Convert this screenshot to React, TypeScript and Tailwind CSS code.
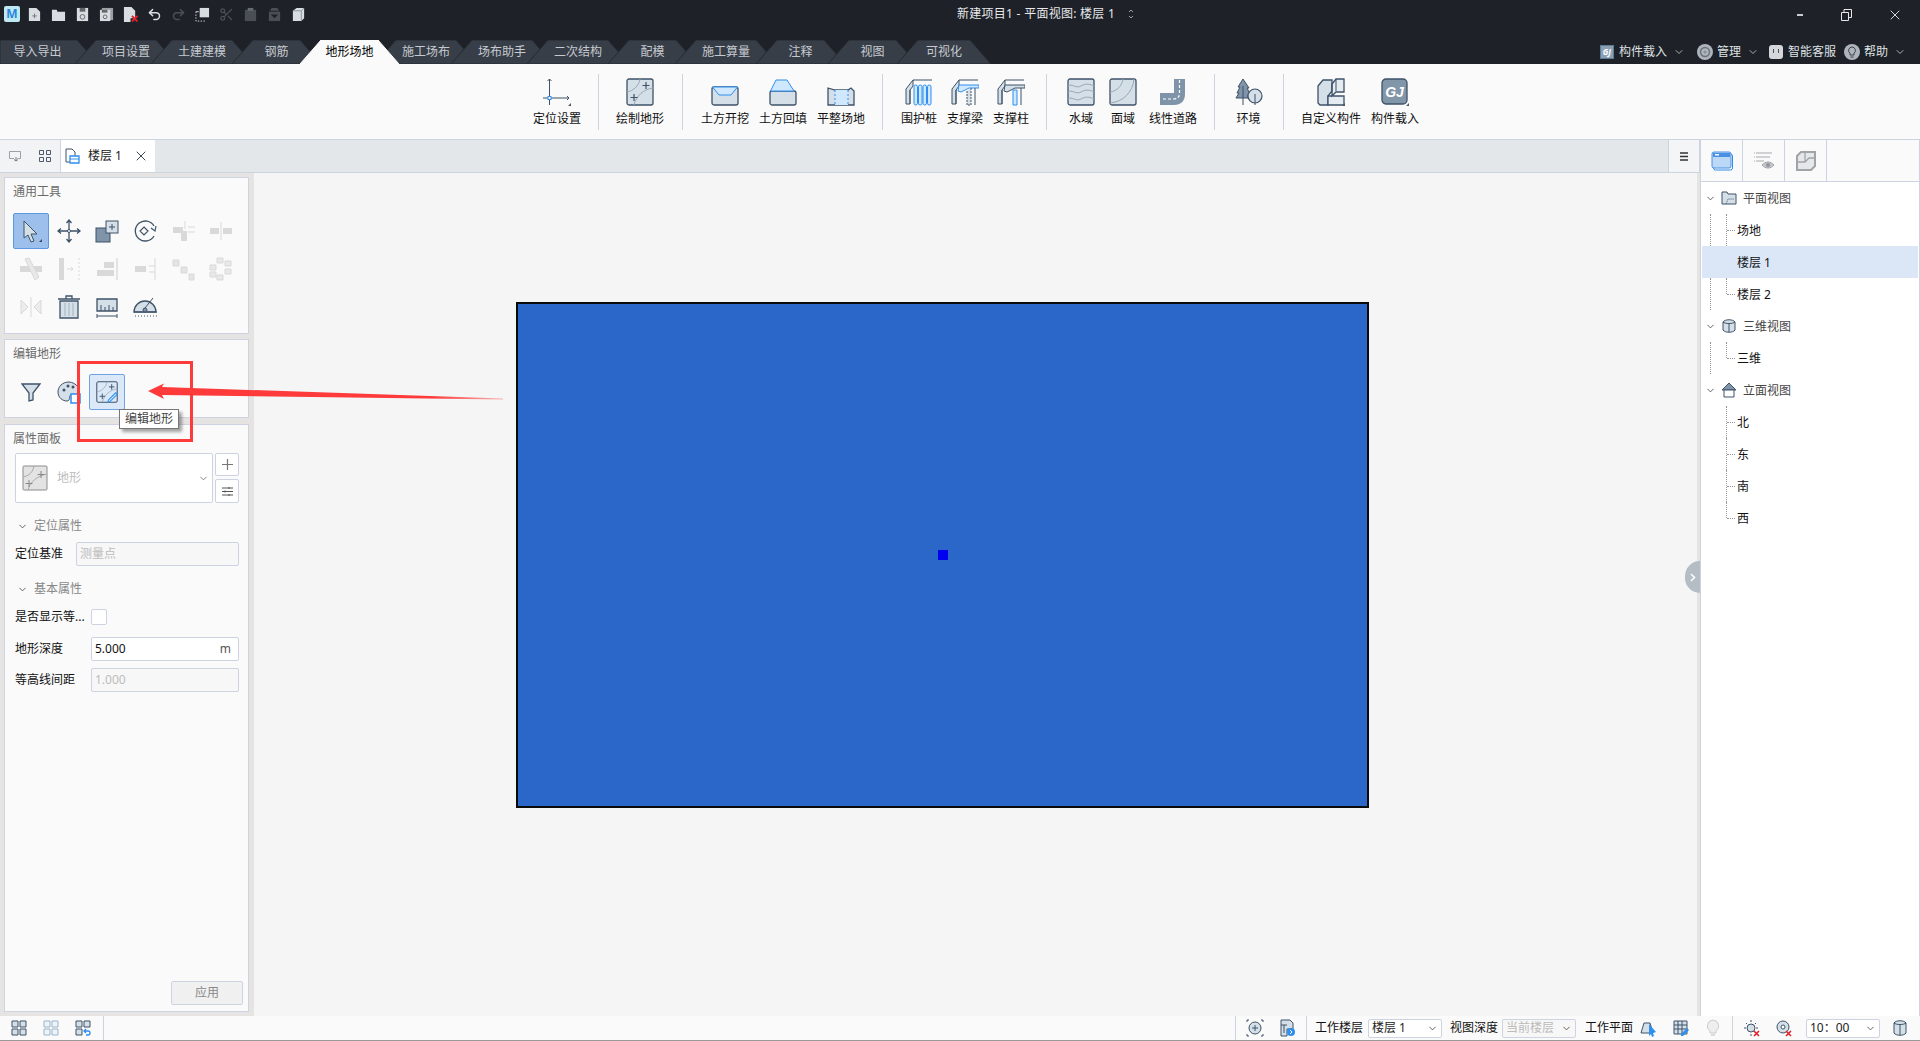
import { ReactNode } from 'react';
import { ChevronDown, Scissors, Undo2, Redo2, X } from 'lucide-react';

const S = '#3e5368';
const F = '#d5dfe8';
const M = '#7f94a9';
const B = '#2e8fef';
const L = '#cfe8fd';
const D = '#d9d9d9';

function Ic({ s = 28, v, children }: { s?: number; v?: number; children: ReactNode }) {
  const box = v ?? s;
  return (
    <svg width={s} height={s} viewBox={`0 0 ${box} ${box}`} fill="none" className="shrink-0">
      {children}
    </svg>
  );
}

const Corner = () => <path d="M28 25v3h-3z" fill="#556" />;

const TABS = [
  { label: '导入导出', w: 98, cls: 'w-[98px] pr-[23px]', first: true },
  { label: '项目设置', w: 102, cls: 'w-[102px] ml-[-23px]' },
  { label: '土建建模', w: 102, cls: 'w-[102px] ml-[-26px]' },
  { label: '钢筋', w: 89, cls: 'w-[89px] ml-[-21px]' },
  { label: '地形场地', w: 99, cls: 'w-[99px] ml-[-21px] z-10', active: true },
  { label: '施工场布', w: 102, cls: 'w-[102px] ml-[-24px]' },
  { label: '场布助手', w: 102, cls: 'w-[102px] ml-[-26px]' },
  { label: '二次结构', w: 102, cls: 'w-[102px] ml-[-26px]' },
  { label: '配模', w: 89, cls: 'w-[89px] ml-[-21px]' },
  { label: '施工算量', w: 102, cls: 'w-[102px] ml-[-22px]' },
  { label: '注释', w: 89, cls: 'w-[89px] ml-[-21px]' },
  { label: '视图', w: 89, cls: 'w-[89px] ml-[-17px]' },
  { label: '可视化', w: 94, cls: 'w-[94px] ml-[-20px]' },
];

function TabBar() {
  return (
    <div className="flex h-6 items-stretch">
      {TABS.map((t) => (
        <div key={t.label} className={`relative flex shrink-0 items-center justify-center ${t.cls}`}>
          <svg width={t.w} height={24} className="absolute left-0 top-0">
            <path
              d={t.first ? `M0 24V0H${t.w - 21}L${t.w} 24Z` : `M0 24L21 0H${t.w - 21}L${t.w} 24Z`}
              fill={t.active ? '#fafafa' : '#383e48'}
              stroke={t.active ? '#fafafa' : '#262a30'}
              strokeWidth="1"
            />
          </svg>
          <span className={`relative text-xs ${t.active ? 'text-black' : 'text-[#c6cad0]'}`}>{t.label}</span>
        </div>
      ))}
    </div>
  );
}

function QuickBar() {
  const c = '#d8dde2';
  const off = '#4a4f56';
  return (
    <div className="flex items-center pl-1 pt-[6px]">
      <div className="flex h-4 w-4 items-center justify-center rounded-[2px] bg-[#bfe9f2] text-xs font-bold leading-none text-[#2a86dc]">M</div>
      <div className="ml-[7px] flex gap-[9px]">
        <Ic s={15} v={16}><path d="M2 1h8l4 4v10H2z" fill={c} /><path d="M8 7v5M5.500 9.500h5" stroke="#777" /></Ic>
        <Ic s={15} v={16}><path d="M1 3h5l1 2h8v10H1z" fill={c} /></Ic>
        <Ic s={15} v={16}><path d="M2 1h12v14H2z" fill={c} /><path d="M5 1h6v4H5z" fill="#666" /><circle cx="8" cy="10.500" r="2.500" fill="none" stroke="#666" /></Ic>
        <Ic s={15} v={16}><path d="M3 1h12v13H3z" fill="#9aa0a6" /><path d="M1 3h11v12H1z" fill={c} /><path d="M3 3h6v3H3z" fill="#666" /><circle cx="6.500" cy="10.500" r="2" fill="none" stroke="#666" /></Ic>
        <Ic s={15} v={16}><path d="M1 0h8l4 4v8H8v4H1z" fill={c} /><path d="M9.500 9.500l6 6M15.500 9.500l-6 6" stroke="#e0202a" strokeWidth="2" /></Ic>
        <Undo2 size={15} color={c} strokeWidth={2.4} />
        <Redo2 size={15} color={off} strokeWidth={2.4} />
        <Ic s={15} v={16}><path d="M5 1h10v10H5z" fill={c} /><path d="M1 5v10h10" stroke={c} strokeDasharray="1.500 1.500" /><path d="M1 5h3" stroke={c} /></Ic>
        <Scissors size={15} color={off} strokeWidth={2} />
        <Ic s={15} v={16}><path d="M2 3h12v12H2z" fill={off} /><path d="M5 1h6v3H5z" fill="#666b72" /></Ic>
        <Ic s={15} v={16}><path d="M2 5h12v10H2z" fill={off} /><path d="M5 1h6l2 3H3z" fill={off} /><path d="M4 8h8l-4 4z" fill="#1e2127" /></Ic>
        <Ic s={15} v={16}><path d="M2 4l4-3h8v11l-3 3H2z" fill={c} /><path d="M11 15V4H2M11 4l3-3" stroke="#8a9097" /></Ic>
      </div>
    </div>
  );
}

function TitleRow() {
  return (
    <div className="relative flex h-10 items-start">
      <QuickBar />
      <div className="ml-[651px] flex items-center pt-[5px] text-xs leading-[18px] tracking-[0.27px] text-[#e6e8ea]">
        <span className="w-[171px] whitespace-nowrap">新建项目1 - 平面视图: 楼层 1</span>
        <svg width="6" height="12" viewBox="0 0 6 12" fill="none" stroke="#9aa0a6"><path d="M1 4l2-2 2 2M1 8l2 2 2-2" /></svg>
      </div>
      <div className="ml-auto flex items-center pr-[17px] pt-[7px]">
        <span className="h-[2px] w-[6px] bg-[#c8ccd0]" />
        <svg width="11" height="12" viewBox="0 0 11 12" fill="none" stroke="#e4e6e8" className="ml-[38px]"><path d="M.5 3.500h7v8h-7zM3 3.500v-3h7.500v8H8" /></svg>
        <X size={16} color="#e4e6e8" strokeWidth={1.4} className="ml-[35px]" />
      </div>
    </div>
  );
}

function TopRight() {
  return (
    <div className="ml-auto flex items-center pb-[1px] pr-[14px] text-xs text-[#dfe2e5]">
      <div className="flex h-[14px] w-[14px] items-center justify-center border border-[#5d7a96] bg-[#8ca0b4] text-[8px] font-bold italic leading-none text-white">GJ</div>
      <span className="ml-[5px]">构件载入</span>
      <ChevronDown size={12} color="#aab0b6" className="ml-[6px]" />
      <svg width="16" height="16" viewBox="0 0 16 16" className="ml-[12px]"><circle cx="8" cy="8" r="8" fill="#aeb4bb" /><circle cx="8" cy="8" r="4.500" fill="none" stroke="#6c7279" strokeWidth="1.500" /><circle cx="8" cy="8" r="1.500" fill="#8a9096" /></svg>
      <span className="ml-1">管理</span>
      <ChevronDown size={12} color="#aab0b6" className="ml-[6px]" />
      <svg width="14" height="14" viewBox="0 0 14 14" className="ml-[10px]"><rect width="14" height="14" rx="3" fill="#d4d8dc" /><path d="M4.500 4v4M9.500 4v4" stroke="#4a4f56" /></svg>
      <span className="ml-[5px]">智能客服</span>
      <svg width="16" height="16" viewBox="0 0 16 16" className="ml-2"><circle cx="8" cy="8" r="8" fill="#aeb4bb" /><path d="M8 3a3.500 3.500 0 0 0-2 6.300V11h4V9.300A3.500 3.500 0 0 0 8 3z" fill="none" stroke="#3b4047" /><path d="M6.500 13h3" stroke="#3b4047" /></svg>
      <span className="ml-1">帮助</span>
      <ChevronDown size={12} color="#aab0b6" className="ml-[6px]" />
    </div>
  );
}

const TerrainArt = ({ pen = false }: { pen?: boolean }) => (
  <>
    <rect x="1" y="1" width="26" height="26" rx="2" fill={pen ? 'none' : F} stroke={S} strokeWidth="1.300" />
    <path d="M1 14C7 13 13 8 14 1M8 27C10 18 18 11 27 10" stroke="#98a6b4" />
    <path d="M20 4v7M16.500 7.500h7M8 16v7M4.500 19.500h7" stroke={S} strokeWidth="1.200" />
  </>
);

const SlabArt = () => (
  <>
    <path d="M8 2h19M1 11L8 2v6L5 12v14H1z" fill={F} stroke={S} />
    <path d="M5 12v14" stroke={S} />
  </>
);

const RIBBON: { items: { label: string; cls: string; icon: ReactNode }[]; cls: string }[] = [
  {
    cls: 'w-[82px]',
    items: [
      {
        label: '定位设置',
        cls: 'w-full',
        icon: (
          <Ic>
            <path d="M6.500 1v26M0 20h26M4.500 3l2-2 2 2M24 18l2 2-2 2" stroke={S} />
            <rect x="5" y="18.500" width="3" height="3" fill="#fff" stroke={B} />
            <Corner />
          </Ic>
        ),
      },
    ],
  },
  {
    cls: 'w-[84px]',
    items: [{ label: '绘制地形', cls: 'w-full', icon: <Ic><TerrainArt /></Ic> }],
  },
  {
    cls: 'pl-[14px] pr-[12px]',
    items: [
      {
        label: '土方开挖',
        cls: 'w-[58px]',
        icon: (
          <Ic>
            <rect x="1" y="9" width="26" height="18" rx="2" fill={F} stroke={S} strokeWidth="1.300" />
            <path d="M1.500 9h25L20 17H8z" fill={L} stroke={B} />
          </Ic>
        ),
      },
      {
        label: '土方回填',
        cls: 'w-[58px]',
        icon: (
          <Ic>
            <rect x="1" y="13" width="26" height="14" rx="2" fill={F} stroke={S} strokeWidth="1.300" />
            <path d="M7 2h11l7 11H1.500z" fill={L} stroke={B} />
          </Ic>
        ),
      },
      {
        label: '平整场地',
        cls: 'w-[58px]',
        icon: (
          <Ic>
            <path d="M1 10l7 2h13l3-2 3 3v14H1z" fill={F} stroke={S} strokeWidth="1.300" />
            <path d="M8 12h13v15H8z" fill={L} />
            <path d="M8 12v15M21 12v15" stroke={B} strokeDasharray="2 2" />
          </Ic>
        ),
      },
    ],
  },
  {
    cls: 'pl-[14px] pr-[12px]',
    items: [
      {
        label: '围护桩',
        cls: 'w-[46px]',
        icon: (
          <Ic>
            <SlabArt />
            {[9, 13.5, 18, 22.5].map((x) => (
              <rect key={x} x={x} y="7" width="3.500" height="20" rx="1.700" fill={L} stroke={B} />
            ))}
          </Ic>
        ),
      },
      {
        label: '支撑梁',
        cls: 'w-[46px]',
        icon: (
          <Ic>
            <SlabArt />
            <path d="M8 7h20v3H18l-8 4-3-1z" fill={L} stroke={B} />
            <path d="M16 13v14h4V10" fill={F} stroke={S} strokeDasharray="2 1" />
            <path d="M24 10v17" stroke={S} />
          </Ic>
        ),
      },
      {
        label: '支撑柱',
        cls: 'w-[46px]',
        icon: (
          <Ic>
            <SlabArt />
            <path d="M8 7h20v3H18l-8 4-3-1z" fill={F} stroke={S} />
            <path d="M16 12h4v15h-4z" fill={L} stroke={B} />
            <path d="M24 10v17" stroke={S} />
          </Ic>
        ),
      },
    ],
  },
  {
    cls: 'pl-[14px] pr-[12px]',
    items: [
      {
        label: '水域',
        cls: 'w-[42px]',
        icon: (
          <Ic>
            <rect x="1" y="1" width="26" height="26" rx="2" fill={F} stroke={S} strokeWidth="1.300" />
            <path d="M1 8c4-3 8 3 13 0s9-2 13 0M1 14c4-3 8 3 13 0s9-2 13 0M1 21c4-3 8 3 13 0s9-2 13 0" stroke="#98a6b4" />
          </Ic>
        ),
      },
      {
        label: '面域',
        cls: 'w-[42px]',
        icon: (
          <Ic>
            <rect x="1" y="1" width="26" height="26" rx="2" fill={F} stroke={S} strokeWidth="1.300" />
            <path d="M1 14C8 13 13 8 14 1M1 25C14 24 24 14 25 1" stroke="#98a6b4" />
          </Ic>
        ),
      },
      {
        label: '线性道路',
        cls: 'w-[58px]',
        icon: (
          <Ic>
            <path d="M15 1h11v15c0 7-4 11-11 11H1V15h14z" fill={M} />
            <path d="M20.500 2v13c0 4-2 6-6 6H2" stroke="#fff" strokeWidth="1.200" strokeDasharray="3 2" />
          </Ic>
        ),
      },
    ],
  },
  {
    cls: 'w-[69px]',
    items: [
      {
        label: '环境',
        cls: 'w-full',
        icon: (
          <Ic>
            <path d="M8 1l6 9h-2l3 6h-2v4H1l3-5H2l3-6H3z" fill={M} stroke={S} />
            <path d="M8 8v19" stroke={S} />
            <circle cx="20" cy="18" r="7" fill={F} stroke={S} strokeWidth="1.200" />
            <path d="M20 16v11" stroke={S} />
          </Ic>
        ),
      },
    ],
  },
  {
    cls: 'pl-[17px]',
    items: [
      {
        label: '自定义构件',
        cls: 'w-[62px]',
        icon: (
          <Ic>
            <path d="M1 8l5-6h9v11l-4 5v9H3l-2-2z" fill={F} stroke={S} strokeWidth="1.300" />
            <path d="M15 6l4-5h8v13h-8l-4 4zM11 18h16v9H11z" fill="#e4ebf1" stroke={S} strokeWidth="1.300" />
            <path d="M15 6v8M19 1v12" stroke={S} />
            <Corner />
          </Ic>
        ),
      },
      {
        label: '构件载入',
        cls: 'w-[66px]',
        icon: (
          <Ic>
            <rect x="1" y="1" width="25" height="25" rx="4" fill="#8296aa" stroke={S} strokeWidth="1.300" />
            <text x="13.500" y="19" textAnchor="middle" fontSize="14" fontWeight="900" fontStyle="italic" fontFamily="Liberation Sans, sans-serif" fill="#fff">GJ</text>
            <Corner />
          </Ic>
        ),
      },
    ],
  },
];

function Ribbon() {
  return (
    <div className="flex h-[76px] border-b border-[#cdd3df] bg-[#fafafa] pl-[516px]">
      {RIBBON.map((g, i) => (
        <div key={i} className={`relative flex h-full shrink-0 pt-[14px] ${g.cls}`}>
          {g.items.map((it) => (
            <div key={it.label} className={`flex shrink-0 flex-col items-center ${it.cls}`}>
              {it.icon}
              <span className="mt-[5px] whitespace-nowrap text-xs leading-4 text-[#111]">{it.label}</span>
            </div>
          ))}
          {i < RIBBON.length - 1 && <span className="absolute bottom-[9px] right-[-1px] top-[10px] w-px bg-[#ccd3db]" />}
        </div>
      ))}
    </div>
  );
}

function TabStrip() {
  return (
    <div className="flex h-[33px] shrink-0 items-stretch border-b border-[#cdd3e0] bg-[#e4e7ea]">
      <div className="flex w-[60px] items-center bg-[#f2f3f4] pl-[9px]">
        <svg width="12" height="12" viewBox="0 0 12 12" fill="none" stroke="#9aa0a8"><path d="M.5 1.500h11v7h-3M5 8.500H.500v-7" /><path d="M7 7v4M5 9.500l2 1.500 2-1.500" stroke="#777" /></svg>
        <svg width="12" height="12" viewBox="0 0 12 12" fill="none" stroke="#4a5a6a" className="ml-[18px]"><path d="M.5.500h4v4h-4zM7.500.500h4v4h-4zM.5 7.500h4v4h-4zM7.500 7.500h4v4h-4z" /></svg>
      </div>
      <div className="flex w-[95px] items-center border-l border-[#cdd3e0] bg-white pl-[4px] text-xs text-[#222]">
        <svg width="15" height="16" viewBox="0 0 15 16" fill="none"><path d="M1 1h6l3 3v4" stroke={S} /><path d="M1 1v13h4" stroke={S} /><path d="M5 8h9v7H5z" fill="#fff" stroke={B} strokeWidth="1.300" /><path d="M5 11h9" stroke={B} /></svg>
        <span className="ml-[8px]">楼层 1</span>
        <X size={16} color="#3d4650" strokeWidth={1.5} className="ml-[11px]" />
      </div>
      <div className="ml-auto flex w-[32px] items-center justify-center border-x border-[#cdd3e0] bg-[#f4f5f6]">
        <svg width="8" height="9" viewBox="0 0 8 9" stroke="#333"><path d="M0 1h8M0 4.500h8M0 8h8" strokeWidth="1.300" /></svg>
      </div>
    </div>
  );
}

function Cell({ on, tint, children }: { on?: boolean; tint?: boolean; children: ReactNode }) {
  return (
    <div className="flex h-[38px] w-[38px] items-center justify-center">
      <div className={`flex h-9 w-9 items-center justify-center rounded-[2px] ${on ? 'border border-[#5b97e2] bg-[#9dbfeb]' : tint ? 'border border-[#6ea3e4] bg-[#dbe8f7]' : ''}`}>{children}</div>
    </div>
  );
}

const TOOLS: ReactNode[] = [
  <Ic s={24}><path d="M5 2l13 13h-6l3 7-3 1-3-7-4 3z" fill={F} stroke={S} /><path d="M23 20v3h-3z" fill="#445" /></Ic>,
  <Ic s={24}><path d="M12 1v22M1 12h22M9.500 4L12 1l2.500 3M9.500 20l2.500 3 2.500-3M4 9.500L1 12l3 2.500M20 9.500l3 2.500-3 2.500" stroke={S} strokeWidth="1.300" /><circle cx="12" cy="12" r="1.500" fill="#fff" stroke={S} /></Ic>,
  <Ic s={24}><rect x="1" y="9" width="14" height="14" fill={M} stroke={S} /><rect x="11" y="2" width="12" height="12" fill={F} stroke={S} /><path d="M17 5v6M14 8h6" stroke={S} /></Ic>,
  <Ic s={24}><path d="M21 17a10 10 0 1 1 0-10" stroke={S} strokeWidth="1.300" /><path d="M18 9l4 3 1-5M11 8l4 4-4 4-4-4z" stroke={S} strokeWidth="1.200" /></Ic>,
  <Ic s={24}><path d="M2 8h10v4h4v10h-6V14H2z" fill={D} /><path d="M14 2v8M17 8h7M17 13h7" stroke={D} /></Ic>,
  <Ic s={24}><path d="M1 9h9v6H1zM14 9h9v6h-9z" fill={D} /><path d="M12 3v18" stroke={D} /></Ic>,
  <Ic s={24}><path d="M1 9h22v6H1z" fill={D} /><path d="M6 2l4-1 10 19-4 3z" fill="#e8e8e8" stroke={D} /></Ic>,
  <Ic s={24}><path d="M2 1h5v22H2z" fill={D} /><path d="M10 12h6M14 10l2 2-2 2" stroke={D} /><path d="M22 1v22" stroke={D} strokeDasharray="2 2" /></Ic>,
  <Ic s={24}><path d="M9 5h10v6H9zM2 13h17v6H2z" fill={D} /><path d="M22 1v22" stroke={D} strokeWidth="1.300" /></Ic>,
  <Ic s={24}><path d="M2 9h11v6H2z" fill={D} /><path d="M22 1v22M16 9h6M16 15h6" stroke={D} /></Ic>,
  <Ic s={24}><path d="M2 3h6v6H2zM10 10h6v6h-6zM18 17h5v6h-5z" fill="#e4e4e4" stroke={D} /></Ic>,
  <Ic s={24}><path d="M8 1h6v5H8zM16 4h6v5h-6zM1 8h6v5H1zM16 12h6v5h-6zM1 15h6v5H1zM8 18h6v5H8z" fill="#e8e8e8" stroke={D} /></Ic>,
  <Ic s={24}><path d="M2 5l7 7-7 7zM22 5l-7 7 7 7z" fill="#ececec" stroke={D} /><path d="M12 2v20" stroke={D} /></Ic>,
  <Ic s={24}><path d="M1 4h22M9 4V1h6v3" stroke={S} strokeWidth="1.300" /><path d="M3 6h18v17H3z" fill={F} stroke={S} strokeWidth="1.300" /><path d="M8 8v13M12 8v13M16 8v13" stroke="#a3b3c2" /></Ic>,
  <Ic s={24}><path d="M2 4h20v12H2z" fill={F} stroke={S} strokeWidth="1.300" /><path d="M6 10v6M10 12v4M14 10v6M18 12v4M2 21h20M2 19v4M22 19v4" stroke={S} /></Ic>,
  <Ic s={24}><path d="M1 17a11 11 0 0 1 22 0z" fill={F} stroke={S} strokeWidth="1.300" /><path d="M1 17h23" stroke={S} /><path d="M2 21h22" stroke={S} strokeDasharray="1 2" /><circle cx="12" cy="15" r="2" fill={M} stroke={S} /><path d="M12 13l8-10" stroke={S} /></Ic>,
];

function PanelTitle({ h, children }: { h: string; children: ReactNode }) {
  return <div className={`pl-[8px] pt-[1px] text-xs leading-[26px] text-[#6a6a6a] ${h}`}>{children}</div>;
}

function FieldBox({ disabled, children }: { disabled?: boolean; children: ReactNode }) {
  return (
    <div className={`flex h-6 flex-1 items-center rounded-[2px] border border-[#cdd3e0] px-[3px] text-xs ${disabled ? 'bg-[#f7f7f7] text-[#bcbcbc]' : 'bg-white text-[#111]'}`}>
      {children}
    </div>
  );
}

function SectionHead({ cls, children }: { cls: string; children: ReactNode }) {
  return (
    <div className={`flex h-5 items-center pl-[12px] text-xs text-[#888] ${cls}`}>
      <ChevronDown size={11} color="#555" strokeWidth={2} />
      <span className="ml-[6px]">{children}</span>
    </div>
  );
}

function LeftColumn() {
  return (
    <div className="flex w-[254px] shrink-0 flex-col bg-[#e6e4e2] pb-1 pl-1 pr-[5px] pt-1">
      <div className="h-[157px] shrink-0 border border-[#cdd3e0] bg-[#fafafa]">
        <PanelTitle h="h-[34px]">通用工具</PanelTitle>
        <div className="ml-[7px] flex flex-wrap">
          {TOOLS.map((t, i) => (
            <Cell key={i} on={i === 0}>{t}</Cell>
          ))}
        </div>
      </div>
      <div className="mt-[5px] h-[79px] shrink-0 border border-[#cdd3e0] bg-[#fafafa]">
        <PanelTitle h="h-[33px]">编辑地形</PanelTitle>
        <div className="ml-[7px] flex">
          <Cell>
            <Ic s={20}><path d="M1 2h18l-7 9v7l-4 1v-8z" fill={F} stroke={S} strokeWidth="1.300" /></Ic>
          </Cell>
          <Cell>
            <Ic s={24}><path d="M12 2C5 2 1 7 1 12c0 6 5 9 9 9 3 0 2-3 3-5 1-3 5-1 8-2 2-1 2-4 0-7-2-3-6-5-9-5z" fill={F} stroke={S} /><circle cx="7" cy="10" r="1.500" fill={S} /><circle cx="11" cy="6" r="1.500" fill={S} /><circle cx="16" cy="7" r="1.500" fill={S} /><rect x="14" y="14" width="9" height="9" fill="#fff" stroke={B} strokeWidth="1.500" /></Ic>
          </Cell>
          <Cell tint>
            <Ic s={22} v={28}>
              <TerrainArt pen />
              <path d="M16 24l9-9 2 2-9 9-3 1z" fill={L} stroke={B} strokeWidth="1.300" />
            </Ic>
          </Cell>
        </div>
      </div>
      <div className="mt-[6px] flex flex-1 flex-col border border-[#cdd3e0] bg-[#fafafa]">
        <PanelTitle h="h-[26px]">属性面板</PanelTitle>
        <div className="mt-[2px] flex gap-[2px] pl-[10px] pr-[9px]">
          <div className="flex h-[50px] w-[198px] items-center rounded-[2px] border border-[#cdd3e0] bg-white pl-[6px] pr-[3px] text-xs text-[#bdbdbd]">
            <Ic s={26}>
              <rect x="1" y="1" width="24" height="24" rx="1" fill="#e3e3e3" stroke="#8d8d8d" />
              <path d="M1 12C7 11 11 7 12 1M6 25C8 17 15 11 25 9" stroke="#aaa" />
              <path d="M19 6v7M15.500 9.500h7M7 15v7M3.500 18.500h7" stroke="#888" />
            </Ic>
            <span className="ml-[9px]">地形</span>
            <ChevronDown size={11} color="#777" className="ml-auto" />
          </div>
          <div className="flex w-6 flex-col gap-[3px]">
            <div className="flex h-[23px] items-center justify-center rounded-[2px] border border-[#cdd3e0] bg-white">
              <svg width="11" height="11" stroke="#777" strokeWidth="1.200"><path d="M5.500 0v11M0 5.500h11" /></svg>
            </div>
            <div className="flex h-6 items-center justify-center rounded-[2px] border border-[#cdd3e0] bg-white">
              <svg width="11" height="9" stroke="#555"><path d="M0 1h11M0 4.500h11M0 8h11" /><path d="M7 0v2M3 3.500v2M7 7v2" /></svg>
            </div>
          </div>
        </div>
        <SectionHead cls="mt-[13px]">定位属性</SectionHead>
        <div className="mt-[6px] flex items-center pl-[10px] pr-[9px] text-xs text-[#111]">
          <span className="w-[61px] shrink-0">定位基准</span>
          <FieldBox disabled>测量点</FieldBox>
        </div>
        <SectionHead cls="mt-[13px]">基本属性</SectionHead>
        <div className="mt-[10px] flex h-4 items-center pl-[10px] text-xs text-[#111]">
          <span className="w-[76px] shrink-0 whitespace-nowrap">是否显示等...</span>
          <span className="h-4 w-4 rounded-[2px] border border-[#cdd3e0] bg-white" />
        </div>
        <div className="mt-[12px] flex items-center pl-[10px] pr-[9px] text-xs text-[#111]">
          <span className="w-[76px] shrink-0">地形深度</span>
          <FieldBox>
            5.000<span className="ml-auto pr-[4px] text-[#555]">m</span>
          </FieldBox>
        </div>
        <div className="mt-[7px] flex items-center pl-[10px] pr-[9px] text-xs text-[#111]">
          <span className="w-[76px] shrink-0">等高线间距</span>
          <FieldBox disabled>1.000</FieldBox>
        </div>
        <div className="mb-[6px] mr-[5px] mt-auto flex h-6 w-[72px] items-center justify-center self-end rounded-[2px] border border-[#cdd3e0] bg-[#f0f0f0] text-xs text-[#888]">应用</div>
      </div>
    </div>
  );
}

function Canvas() {
  return (
    <div className="min-w-0 flex-1 bg-[#f5f5f5] pl-[262px] pt-[129px]">
      <div className="flex h-[506px] w-[853px] items-center justify-center border-2 border-[#0a0a0a] bg-[#2a67c8]">
        <span className="h-[10px] w-[10px] bg-[#0000f0]" />
      </div>
    </div>
  );
}

const TREE = [
  { label: '平面视图', icon: 'plan' },
  { label: '场地', g1: true, g2: 'full', tick: true },
  { label: '楼层 1', sel: true },
  { label: '楼层 2', g1: true, g2: 'half', tick: true },
  { label: '三维视图', icon: 'cube' },
  { label: '三维', g1: true, g2: 'half', tick: true },
  { label: '立面视图', icon: 'house' },
  { label: '北', g2: 'full', tick: true },
  { label: '东', g2: 'full', tick: true },
  { label: '南', g2: 'full', tick: true },
  { label: '西', g2: 'half', tick: true },
];

function TreeIcon({ kind }: { kind?: string }) {
  if (kind === 'plan')
    return <Ic s={16}><path d="M1 2h5l1 2h8v10H1z" fill={F} stroke={S} /><path d="M5 14l2-5h6" stroke={S} strokeDasharray="1 1" /></Ic>;
  if (kind === 'cube')
    return <Ic s={16}><path d="M2 4c2-3 10-3 12 0v8c-2 3-10 3-12 0z" fill={F} stroke={S} /><path d="M2 4c2 2 10 2 12 0M8 6v8" stroke={S} /></Ic>;
  return <Ic s={16}><path d="M8 1l7 7H1z" fill={M} stroke={S} /><path d="M3 8h10v7H3z" fill="#fff" stroke={S} /></Ic>;
}

function RightPanel() {
  return (
    <div className="flex w-[220px] shrink-0 flex-col border-l border-[#cdd3e0] border-r bg-white">
      <div className="flex h-[42px] shrink-0 border-b border-[#cdd3e0] bg-[#fafafa]">
        <div className="flex w-[42px] items-center justify-center border-r border-[#cdd3e0]">
          <svg width="22" height="20" viewBox="0 0 22 20" fill="none"><rect x="2.500" y="3" width="19" height="16" rx="2" fill="none" stroke={B} /><rect x="1" y="1" width="19" height="16" rx="2" fill="#bcd8f7" stroke="#4a90e2" /><path d="M2 2h17v4H2z" fill="#4a90e2" /><path d="M4 3h4v1.500H4z" fill="#fff" /></svg>
        </div>
        <div className="flex w-[42px] items-center justify-center border-r border-[#cdd3e0]">
          <svg width="22" height="20" viewBox="0 0 22 20" fill="none" stroke="#a4a8ad"><path d="M3 2h16M1 2h1M3 6h14M1 6h1M3 10h8M1 10h1" /><path d="M9 14c3-4 9-4 12 0-3 4-9 4-12 0z" fill="#c5c8cc" /><circle cx="15" cy="14" r="2" fill="#8e9296" /></svg>
        </div>
        <div className="flex w-[42px] items-center justify-center border-r border-[#cdd3e0]">
          <svg width="20" height="20" viewBox="0 0 20 20" fill="none" stroke="#a0a4a9" strokeWidth="2"><path d="M5 1h14v14l-4 4H1V5z" fill="#e6e7e8" /><path d="M1 11h8V1M9 11l4-4h6" strokeWidth="1.300" /></svg>
        </div>
      </div>
      <div className="relative text-xs text-[#111]">
        {TREE.map((r) => (
          <div key={r.label} className={`relative flex h-8 items-center ${r.sel ? 'mx-[1px] bg-[#dbe7f7]' : ''}`}>
            {r.g1 && <span className="absolute bottom-0 left-[9px] top-0 border-l border-dotted border-[#999]" />}
            {r.g2 === 'full' && <span className="absolute bottom-0 left-[25px] top-0 border-l border-dotted border-[#999]" />}
            {r.g2 === 'half' && <span className="absolute left-[25px] top-0 h-1/2 border-l border-dotted border-[#999]" />}
            {r.tick && <span className="absolute left-[26px] top-1/2 w-2 border-t border-dotted border-[#999]" />}
            {r.icon ? (
              <>
                <ChevronDown size={11} color="#555" strokeWidth={2} className="ml-[4px]" />
                <span className="ml-[5px]"><TreeIcon kind={r.icon} /></span>
                <span className="ml-[6px] pt-[1px] text-[#444]">{r.label}</span>
              </>
            ) : (
              <span className={`pt-[1px] ${r.sel ? 'ml-[35px]' : 'ml-[36px]'}`}>{r.label}</span>
            )}
          </div>
        ))}
      </div>
    </div>
  );
}

function StatusSelect({ disabled, w, children }: { disabled?: boolean; w: string; children: ReactNode }) {
  return (
    <div className={`flex h-[19px] items-center justify-between rounded-[2px] border border-[#cdd3e0] px-[3px] text-xs ${w} ${disabled ? 'bg-[#f7f7f7] text-[#bbb]' : 'bg-white text-[#222]'}`}>
      {children}
      <ChevronDown size={11} color="#555" />
    </div>
  );
}

function StatusBar() {
  const grid = (a: string, b: string) => (
    <svg width="16" height="16" viewBox="0 0 16 16">
      <path d="M1 1h6v6H1zM9 1h6v6H9zM9 9h6v6H9z" fill={a} stroke={b} />
      <path d="M1 9h6v6H1z" fill={a} stroke={b} />
    </svg>
  );
  return (
    <div className="flex h-[25px] shrink-0 items-center border-b border-[#999] bg-[#fafafa] text-xs text-[#111]">
      <div className="ml-[11px] flex w-[92px] gap-4 pr-[12px]">
        {grid(F, S)}
        {grid('#eef3f7', '#9ab5cc')}
        <svg width="16" height="16" viewBox="0 0 16 16">
          <path d="M1 1h6v6H1zM9 1h6v6H9zM1 9h6v6H1z" fill={F} stroke={S} />
          <path d="M11 9l-2 2 2 2M9.500 11H13a2 2 0 0 1 0 4h-2" fill="none" stroke={B} strokeWidth="1.300" />
        </svg>
      </div>
      <span className="h-full w-px bg-[#ccd3db]" />
      <div className="ml-auto flex h-full items-center pr-[11px]">
        <span className="h-full w-px bg-[#ccd3db]" />
        <span className="ml-[10px]">
          <Ic s={18}><circle cx="9" cy="9" r="6" fill={F} stroke={S} /><path d="M9 6v6M6 9h6M1 3V1h2M17 3V1h-2M1 15v2h2M17 15v2h-2" stroke={S} /></Ic>
        </span>
        <span className="ml-[14px]">
          <Ic s={18}><path d="M3 1h9l3 3v6H9v7H3z" fill={F} stroke={S} /><path d="M3 6h6M6 6v8" stroke={S} /><circle cx="13" cy="13" r="4" fill={B} /><path d="M12 11l2 2-2 2" stroke="#fff" fill="none" /></Ic>
        </span>
        <span className="ml-[10px] h-full w-px bg-[#ccd3db]" />
        <span className="ml-[8px] whitespace-nowrap">工作楼层</span>
        <span className="ml-[5px]"><StatusSelect w="w-[74px]">楼层 1</StatusSelect></span>
        <span className="ml-[8px] whitespace-nowrap">视图深度</span>
        <span className="ml-1"><StatusSelect w="w-[74px]" disabled>当前楼层</StatusSelect></span>
        <span className="ml-[9px] whitespace-nowrap">工作平面</span>
        <span className="ml-[7px]">
          <Ic s={18}><path d="M1 14l3-10h6l3 10z" fill={F} stroke={S} /><path d="M9 5l7 8-3 1 1 3-2 1-1-3-2 2z" fill={B} /></Ic>
        </span>
        <span className="ml-[14px]">
          <Ic s={18}><path d="M2 2h13v13H2z" fill={F} stroke={S} /><path d="M2 6h13M2 10h13M6 2v13M10 2v13" stroke={S} /><path d="M9 15l6-6 2 2-6 6H9z" fill={B} /></Ic>
        </span>
        <span className="ml-[14px]">
          <Ic s={18}><path d="M9 1a6 6 0 0 0-3 11v2h6v-2A6 6 0 0 0 9 1z" fill="#eee" stroke="#ccc" /><path d="M7 16h4" stroke="#bbb" /></Ic>
        </span>
        <span className="ml-[10px] h-full w-px bg-[#ccd3db]" />
        <span className="ml-[10px]">
          <Ic s={18}><circle cx="8" cy="9" r="4" fill={F} stroke={S} /><path d="M8 1v2M1 9h2M13 9h2M8 15v2M3 4l1 1M13 4l-1 1" stroke={S} /><path d="M11 12l5 5M16 12l-5 5" stroke="#e0202a" strokeWidth="1.600" /></Ic>
        </span>
        <span className="ml-[14px]">
          <Ic s={18}><circle cx="8" cy="8" r="6" fill={F} stroke={S} /><circle cx="8" cy="8" r="2" fill="#fff" stroke={S} /><path d="M11 12l5 5M16 12l-5 5" stroke="#e0202a" strokeWidth="1.600" /></Ic>
        </span>
        <span className="ml-[13px]"><StatusSelect w="w-[74px]">10：00</StatusSelect></span>
        <span className="ml-[11px]">
          <Ic s={18}><path d="M3 4c2-3 10-3 12 0v10c-2 3-10 3-12 0z" fill={F} stroke={S} /><path d="M3 4c2 2 10 2 12 0M9 6v10" stroke={S} /></Ic>
        </span>
      </div>
    </div>
  );
}

export default function App() {
  return (
    <div className="relative flex h-[1041px] w-[1920px] flex-col overflow-hidden bg-[#1e2127] [font-family:'Noto_Sans','Noto_Sans_CJK_SC',sans-serif]">
      <TitleRow />
      <div className="flex h-6 shrink-0 items-stretch">
        <TabBar />
        <TopRight />
      </div>
      <Ribbon />
      <div className="flex min-h-0 flex-1 bg-[#fafafa]">
        <div className="flex w-[1700px] shrink-0 flex-col">
          <TabStrip />
          <div className="flex min-h-0 flex-1">
            <LeftColumn />
            <Canvas />
            <div className="w-[3px] shrink-0 bg-[#e6e4e2]" />
          </div>
        </div>
        <RightPanel />
      </div>
      <StatusBar />

      {/* collapse handle */}
      <div className="absolute left-[1685px] top-[561px] flex h-8 w-[15px] items-center justify-center rounded-l-full bg-[#b4bcc4]">
        <svg width="6" height="9" fill="none" stroke="#fff" strokeWidth="1.500"><path d="M1 1l3.500 3.500L1 8" /></svg>
      </div>

      {/* annotation */}
      <div className="absolute left-[77px] top-[361px] h-[81px] w-[116px] border-[3px] border-[#fe3a3a]" />
      <svg width="370" height="30" className="absolute left-[140px] top-[375px]" fill="none">
        <defs>
          <linearGradient id="tail" x1="0" x2="1" y1="0" y2="0">
            <stop offset="0.8" stopColor="#fe3a3a" />
            <stop offset="1" stopColor="#fe3a3a" stopOpacity="0.35" />
          </linearGradient>
        </defs>
        <path d="M8 16L24 8.500L22 12L363 23.500V24.500L22 20L24 24Z" fill="url(#tail)" />
      </svg>
      <div className="absolute left-[119px] top-[409px] flex h-5 w-[60px] items-center justify-center border border-[#777] bg-white text-xs text-[#444] shadow-[3px_3px_3px_rgba(0,0,0,0.35)]">编辑地形</div>
    </div>
  );
}
